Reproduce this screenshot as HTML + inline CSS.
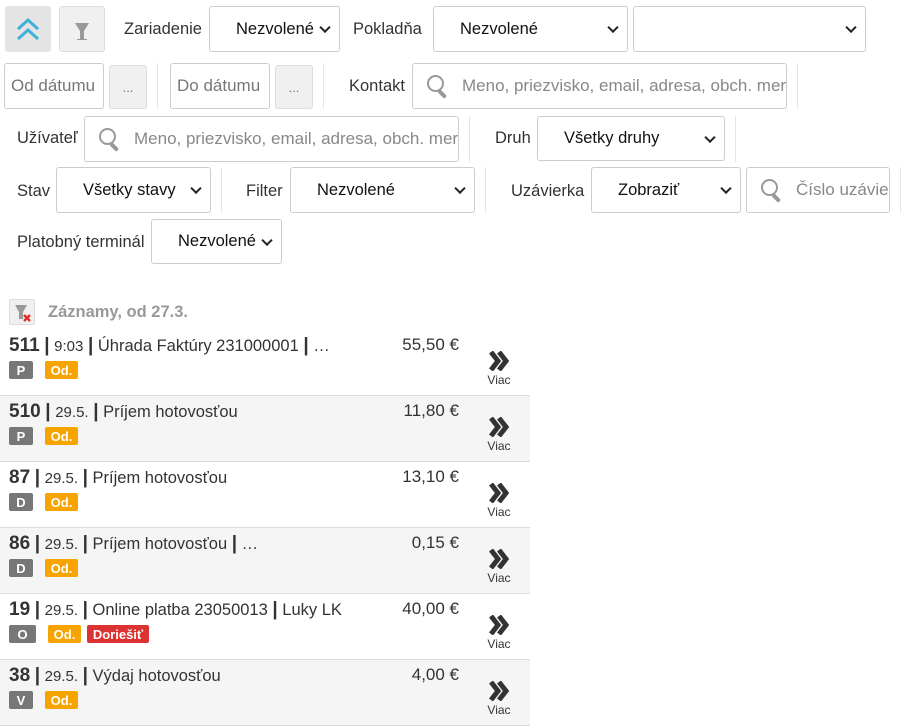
<!DOCTYPE html>
<html><head><meta charset="utf-8"><style>
*{box-sizing:border-box;margin:0;padding:0}
body{width:911px;height:720px;background:#fff;font-family:"Liberation Sans",sans-serif;color:#333;position:relative;overflow:hidden;font-size:16.5px}
.a{position:absolute}
.lbl{position:absolute;font-size:16.5px;color:#333;line-height:20px}
.sel{position:absolute;border:1px solid #ccc;border-radius:3px;background:#fff;font-size:16.5px;color:#111;display:flex;align-items:center;padding-left:26px}
.sel::after{content:"";position:absolute;right:10px;top:50%;width:6px;height:6px;border-right:2px solid #222;border-bottom:2px solid #222;transform:translateY(-70%) rotate(45deg)}
.inp{position:absolute;border:1px solid #ccc;border-radius:3px;background:#fff;font-size:17px;color:#888;display:flex;align-items:center;padding-left:6px;overflow:hidden;white-space:nowrap}
.btn{position:absolute;background:#f0f0f0;border:1px solid #ddd;border-radius:3px;color:#777;font-size:13px;display:flex;align-items:center;justify-content:center}
.sep{position:absolute;width:1px;background:#e5e5e5}
.mag{display:inline-block;width:28px;height:24px;position:relative;margin-right:9px;flex:none}
.mag::before{content:"";position:absolute;left:2px;top:1px;width:13px;height:13px;border:2px solid #999;border-radius:50%}
.mag::after{content:"";position:absolute;left:15px;top:15px;width:10px;height:4px;background:#999;transform:rotate(45deg);transform-origin:0 0;border-radius:2px}
.row{position:absolute;left:0;width:530px;height:66px;border-bottom:1px solid #ddd}
.row .t{position:absolute;left:9px;top:5px;font-size:16.5px;white-space:nowrap}
.row .t b{font-size:19px}
.row .t .s{font-size:15px}
.row .amt{position:absolute;right:71px;top:5px;font-size:17px}
.bd{position:absolute;top:31px;height:18px;border-radius:2px;color:#fff;font-weight:bold;font-size:13px;display:flex;align-items:center;justify-content:center}
.g{background:#777;width:24px}
.o{background:#f7a300;width:33px}
.r{background:#dc3232;width:62px}
.more{position:absolute;left:486px;top:21px;width:26px;text-align:center;font-size:12px;color:#333;line-height:14px}
.more svg{display:block;margin:0 auto 2px}
</style></head><body>
<div class="a" style="left:5px;top:6px;width:46px;height:46px;background:#e4e4e4;border-radius:3px"><svg width="46" height="46"><path d="M13 23 L23 14 L33 23 M13 33 L23 24 L33 33" fill="none" stroke="#3fb0d8" stroke-width="3"/></svg></div>
<div class="a" style="left:59px;top:6px;width:46px;height:46px;background:#f0f0f0;border:1px solid #ddd;border-radius:3px"><svg width="44" height="44"><path d="M15 16 H29 L24 24 V32 H27 V33 H17 V32 H20 V24 Z" fill="#999"/></svg></div>
<div class="lbl" style="left:124px;top:19px">Zariadenie</div>
<div class="sel" style="left:209px;top:6px;width:131px;height:46px">Nezvolené</div>
<div class="lbl" style="left:353px;top:19px">Pokladňa</div>
<div class="sel" style="left:433px;top:6px;width:195px;height:46px">Nezvolené</div>
<div class="sel" style="left:633px;top:6px;width:233px;height:46px"></div>

<div class="inp" style="left:4px;top:63px;width:100px;height:46px;color:#777">Od dátumu</div>
<div class="btn" style="left:109px;top:65px;width:38px;height:44px">...</div>
<div class="sep" style="left:157px;top:63px;height:46px"></div>
<div class="inp" style="left:170px;top:63px;width:100px;height:46px;color:#777">Do dátumu</div>
<div class="btn" style="left:275px;top:65px;width:38px;height:44px">...</div>
<div class="sep" style="left:323px;top:63px;height:46px"></div>
<div class="lbl" style="left:349px;top:76px">Kontakt</div>
<div class="inp" style="left:412px;top:63px;width:375px;height:46px;padding-left:12px"><span class="mag"></span>Meno, priezvisko, email, adresa, obch. mer</div>
<div class="sep" style="left:797px;top:63px;height:46px"></div>

<div class="lbl" style="left:17px;top:128px">Užívateľ</div>
<div class="inp" style="left:84px;top:116px;width:375px;height:46px;padding-left:12px"><span class="mag"></span>Meno, priezvisko, email, adresa, obch. mer</div>
<div class="sep" style="left:469px;top:116px;height:46px"></div>
<div class="lbl" style="left:495px;top:128px">Druh</div>
<div class="sel" style="left:537px;top:116px;width:188px;height:45px">Všetky druhy</div>
<div class="sep" style="left:735px;top:116px;height:46px"></div>

<div class="lbl" style="left:17px;top:181px">Stav</div>
<div class="sel" style="left:56px;top:167px;width:155px;height:46px">Všetky stavy</div>
<div class="sep" style="left:221px;top:167px;height:46px"></div>
<div class="lbl" style="left:246px;top:181px">Filter</div>
<div class="sel" style="left:290px;top:167px;width:185px;height:46px">Nezvolené</div>
<div class="sep" style="left:485px;top:167px;height:46px"></div>
<div class="lbl" style="left:511px;top:181px">Uzávierka</div>
<div class="sel" style="left:591px;top:167px;width:150px;height:46px">Zobraziť</div>
<div class="inp" style="left:746px;top:167px;width:144px;height:46px;padding-left:12px"><span class="mag"></span>Číslo uzávierky</div>
<div class="sep" style="left:900px;top:167px;height:46px"></div>

<div class="lbl" style="left:17px;top:232px">Platobný terminál</div>
<div class="sel" style="left:151px;top:219px;width:131px;height:45px">Nezvolené</div>

<div class="a" style="left:9px;top:299px;width:26px;height:26px;background:#f0f0f0;border:1px solid #ddd;border-radius:2px"><svg width="24" height="24"><path d="M5 5 H17 L13 12 V19 H9 V12 Z" fill="#999"/><path d="M14 15 L20 21 M20 15 L14 21" stroke="#e03030" stroke-width="2.5"/></svg></div>
<div class="lbl" style="left:48px;top:302px;font-weight:bold;color:#999">Záznamy, od 27.3.</div>

<div class="row" style="top:330px;background:#fff"><div class="t"><b>511</b> <b>|</b> <span class="s">9:03</span> <b>|</b> Úhrada Faktúry 231000001 <b>|</b> …</div><div class="amt">55,50 €</div><div class="bd g" style="left:9px">P</div><div class="bd o" style="left:45px">Od.</div><div class="more"><svg width="22" height="20"><path d="M3 1 L10 10 L3 19 M11 1 L18 10 L11 19" fill="none" stroke="#333" stroke-width="5"/></svg>Viac</div></div>
<div class="row" style="top:396px;background:#f5f5f5"><div class="t"><b>510</b> <b>|</b> <span class="s">29.5.</span> <b>|</b> Príjem hotovosťou</div><div class="amt">11,80 €</div><div class="bd g" style="left:9px">P</div><div class="bd o" style="left:45px">Od.</div><div class="more"><svg width="22" height="20"><path d="M3 1 L10 10 L3 19 M11 1 L18 10 L11 19" fill="none" stroke="#333" stroke-width="5"/></svg>Viac</div></div>
<div class="row" style="top:462px;background:#fff"><div class="t"><b>87</b> <b>|</b> <span class="s">29.5.</span> <b>|</b> Príjem hotovosťou</div><div class="amt">13,10 €</div><div class="bd g" style="left:9px">D</div><div class="bd o" style="left:45px">Od.</div><div class="more"><svg width="22" height="20"><path d="M3 1 L10 10 L3 19 M11 1 L18 10 L11 19" fill="none" stroke="#333" stroke-width="5"/></svg>Viac</div></div>
<div class="row" style="top:528px;background:#f5f5f5"><div class="t"><b>86</b> <b>|</b> <span class="s">29.5.</span> <b>|</b> Príjem hotovosťou <b>|</b> …</div><div class="amt">0,15 €</div><div class="bd g" style="left:9px">D</div><div class="bd o" style="left:45px">Od.</div><div class="more"><svg width="22" height="20"><path d="M3 1 L10 10 L3 19 M11 1 L18 10 L11 19" fill="none" stroke="#333" stroke-width="5"/></svg>Viac</div></div>
<div class="row" style="top:594px;background:#fff"><div class="t"><b>19</b> <b>|</b> <span class="s">29.5.</span> <b>|</b> Online platba 23050013 <b>|</b> Luky LK</div><div class="amt">40,00 €</div><div class="bd g" style="left:9px;width:27px">O</div><div class="bd o" style="left:48px">Od.</div><div class="bd r" style="left:87px">Doriešiť</div><div class="more"><svg width="22" height="20"><path d="M3 1 L10 10 L3 19 M11 1 L18 10 L11 19" fill="none" stroke="#333" stroke-width="5"/></svg>Viac</div></div>
<div class="row" style="top:660px;background:#f5f5f5"><div class="t"><b>38</b> <b>|</b> <span class="s">29.5.</span> <b>|</b> Výdaj hotovosťou</div><div class="amt">4,00 €</div><div class="bd g" style="left:9px">V</div><div class="bd o" style="left:45px">Od.</div><div class="more"><svg width="22" height="20"><path d="M3 1 L10 10 L3 19 M11 1 L18 10 L11 19" fill="none" stroke="#333" stroke-width="5"/></svg>Viac</div></div>
</body></html>
